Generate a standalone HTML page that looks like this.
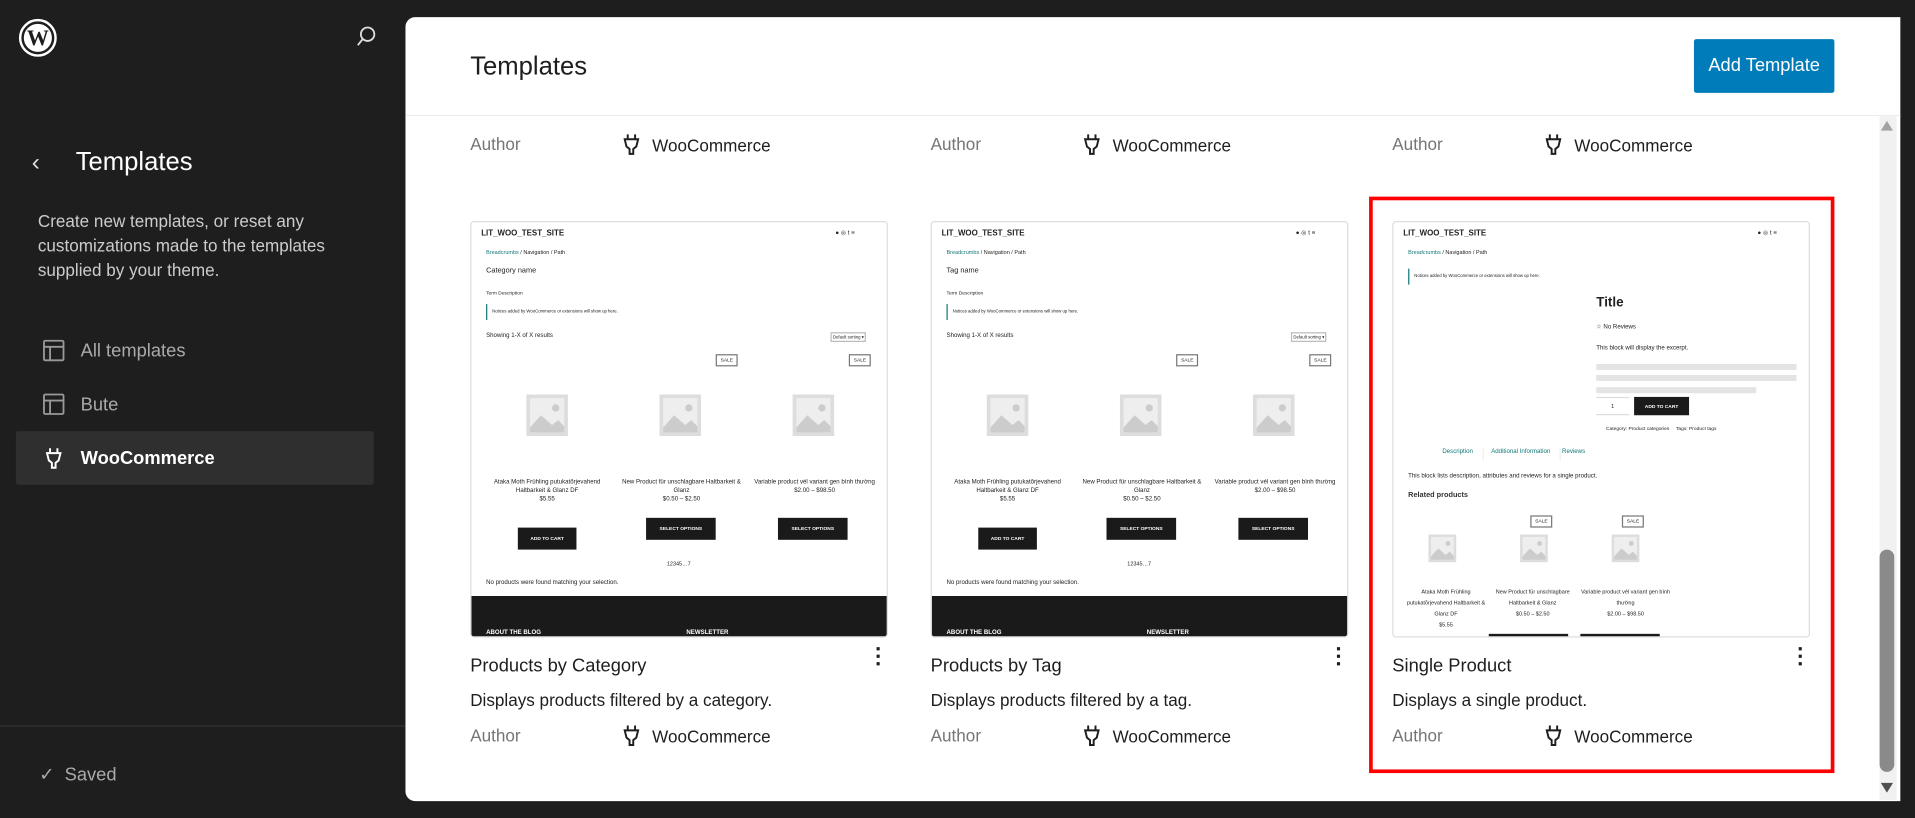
<!DOCTYPE html>
<html><head><meta charset="utf-8"><style>
*{box-sizing:border-box;margin:0;padding:0}
html,body{width:1915px;height:818px;overflow:hidden;background:#1e1e1e;font-family:"Liberation Sans",sans-serif}
#s{position:absolute;left:0;top:0;width:1568px;height:670px;transform:scale(1.22130);transform-origin:0 0}
.a{position:absolute;white-space:nowrap}
.nav{color:#aaa;font-size:15px}
.pv{position:absolute;top:181px;width:342px;height:341px;border:1px solid #ddd;border-radius:3px;overflow:hidden;background:#fff;color:#222}
.pv .a{font-size:4.5px}
.ph{position:absolute;width:36px;height:36px}
.btn{position:absolute;background:#1a1a1a;color:#fff;font-size:4px;font-weight:bold;text-align:center;line-height:18px;height:18px}
.sale{position:absolute;border:1px solid #777;font-size:4px;padding:2px 3px;line-height:4px}
.ct{text-align:center;white-space:normal;font-size:5px!important;line-height:7px}
.t{font-size:15px;color:#1e1e1e}
.d{font-size:14px;color:#1e1e1e}
.au{font-size:14px;color:#757575}
.wc{font-size:14px;color:#1e1e1e}
</style></head><body><div id="s">
<!-- sidebar -->
<svg class="a" style="left:15px;top:15px" width="32" height="32" viewBox="0 0 32 32"><circle cx="16" cy="16" r="14.5" fill="none" stroke="#fff" stroke-width="2"/><circle cx="16" cy="16" r="11.5" fill="#fff"/><text x="16" y="22" text-anchor="middle" font-family="Liberation Serif" font-weight="bold" font-size="18" fill="#1e1e1e">W</text></svg>
<svg class="a" style="left:290px;top:20px" width="20" height="20" viewBox="0 0 20 20"><circle cx="11" cy="8" r="5.5" fill="none" stroke="#ddd" stroke-width="1.5"/><path d="M7 12L3 17" stroke="#ddd" stroke-width="1.5"/></svg>
<div class="a" style="left:26px;top:122px;color:#ddd;font-size:20px">‹</div>
<div class="a" style="left:62px;top:121px;color:#fff;font-size:21px">Templates</div>
<div class="a" style="left:31px;top:171px;color:#ccc;font-size:14px;line-height:20px;white-space:normal;width:260px">Create new templates, or reset any customizations made to the templates supplied by your theme.</div>
<svg class="a" style="left:34px;top:277px" width="20" height="20" viewBox="0 0 20 20" fill="none" stroke="#999" stroke-width="1.5"><rect x="2" y="2" width="16" height="16" rx="1"/><path d="M2 7H18M7 7V18"/></svg>
<div class="a nav" style="left:66px;top:279px">All templates</div>
<svg class="a" style="left:34px;top:321px" width="20" height="20" viewBox="0 0 20 20" fill="none" stroke="#999" stroke-width="1.5"><rect x="2" y="2" width="16" height="16" rx="1"/><path d="M2 7H18M7 7V18"/></svg>
<div class="a nav" style="left:66px;top:323px">Bute</div>
<div class="a" style="left:13px;top:353px;width:293px;height:44px;background:#2f2f2f;border-radius:2px"></div>
<svg class="a" style="left:34px;top:365px" width="20" height="20" viewBox="0 0 20 20" fill="none" stroke="#fff" stroke-width="1.6"><path d="M7 2V6M13 2V6M4.5 6H15.5L14 12L11.5 14V18H8.5V14L6 12Z"/></svg>
<div class="a" style="left:66px;top:367px;color:#fff;font-size:15px;font-weight:bold">WooCommerce</div>
<div class="a" style="left:0;top:594px;width:332px;height:1px;background:#333"></div>
<div class="a" style="left:32px;top:625px;color:#aaa;font-size:15px">✓&nbsp;&nbsp;Saved</div>
<!-- main -->
<div class="a" style="left:332px;top:14px;width:1224px;height:642px;background:#fff;border-radius:8px 0 0 8px;overflow:hidden">
</div>
<div class="a" style="left:332px;top:94px;width:1224px;height:1px;background:#eee"></div>
<div class="a" style="left:385px;top:43px;font-size:21px;color:#1e1e1e">Templates</div>
<div class="a" style="left:1387px;top:32px;width:115px;height:44px;background:#007cba;border-radius:2px;color:#fff;font-size:15px;text-align:center;line-height:44px">Add Template</div>
<!-- scrollbar -->
<div class="a" style="left:1539px;top:95px;width:14px;height:560px;background:#f1f1f1"></div>
<div class="a" style="left:1540px;top:99px;width:0;height:0;border-left:5px solid transparent;border-right:5px solid transparent;border-bottom:8px solid #a3a3a3"></div>
<div class="a" style="left:1540px;top:641px;width:0;height:0;border-left:5px solid transparent;border-right:5px solid transparent;border-top:8px solid #505050"></div>
<div class="a" style="left:1539px;top:450px;width:12px;height:182px;background:#8a8a8a;border-radius:6px"></div>
<!-- top partial row -->
<div class="a" style="left:385px;top:86px;width:1100px;height:8px;overflow:hidden"></div>
<div class="a au" style="left:385px;top:110px">Author</div>
<div class="a au" style="left:762px;top:110px">Author</div>
<div class="a au" style="left:1140px;top:110px">Author</div>
<svg class="a" style="left:507px;top:108px" width="20" height="20" viewBox="0 0 20 20" fill="none" stroke="#1e1e1e" stroke-width="1.6"><path d="M7 2V6M13 2V6M4.5 6H15.5L14 12L11.5 14V18H8.5V14L6 12Z"/></svg>
<svg class="a" style="left:884px;top:108px" width="20" height="20" viewBox="0 0 20 20" fill="none" stroke="#1e1e1e" stroke-width="1.6"><path d="M7 2V6M13 2V6M4.5 6H15.5L14 12L11.5 14V18H8.5V14L6 12Z"/></svg>
<svg class="a" style="left:1262px;top:108px" width="20" height="20" viewBox="0 0 20 20" fill="none" stroke="#1e1e1e" stroke-width="1.6"><path d="M7 2V6M13 2V6M4.5 6H15.5L14 12L11.5 14V18H8.5V14L6 12Z"/></svg>
<div class="a wc" style="left:534px;top:111px">WooCommerce</div>
<div class="a wc" style="left:911px;top:111px">WooCommerce</div>
<div class="a wc" style="left:1289px;top:111px">WooCommerce</div>

<!-- preview 1 & 2 -->
<div class="pv" style="left:385px">
 <div class="a" style="left:8px;top:6px;font-size:6.5px!important;font-weight:bold">LIT_WOO_TEST_SITE</div>
 <div class="a" style="left:298px;top:6px;font-size:5px!important">● ◎ t ≡</div>
 <div class="a" style="left:12px;top:22px"><span style="color:#177">Breadcrumbs</span> / Navigation / Path</div>
 <div class="a" style="left:12px;top:37px;font-size:6px!important">Category name</div>
 <div class="a" style="left:12px;top:55px;font-size:4px!important">Term Description</div>
 <div class="a" style="left:12px;top:67px;height:13px;border-left:1px solid #177;padding-left:4px;line-height:13px;font-size:3.5px!important">Notices added by WooCommerce or extensions will show up here.</div>
 <div class="a" style="left:12px;top:90px;font-size:5px!important">Showing 1-X of X results</div>
 <div class="a" style="left:294px;top:90px;border:1px solid #bbb;font-size:3.5px!important;padding:1px">Default sorting ▾</div>
 <div class="sale" style="left:200px;top:108px">SALE</div><div class="sale" style="left:309px;top:108px">SALE</div>
 <svg class="ph" style="left:44px;top:140px" viewBox="0 0 36 36"><rect x="1" y="1" width="34" height="34" fill="#ddd"/><rect x="4" y="4" width="28" height="28" fill="#eee"/><circle cx="25" cy="12" r="3" fill="#ccc"/><path d="M4 28L13 18L22 26L27 22L32 27V32H4Z" fill="#ccc"/></svg>
 <svg class="ph" style="left:153px;top:140px" viewBox="0 0 36 36"><rect x="1" y="1" width="34" height="34" fill="#ddd"/><rect x="4" y="4" width="28" height="28" fill="#eee"/><circle cx="25" cy="12" r="3" fill="#ccc"/><path d="M4 28L13 18L22 26L27 22L32 27V32H4Z" fill="#ccc"/></svg>
 <svg class="ph" style="left:262px;top:140px" viewBox="0 0 36 36"><rect x="1" y="1" width="34" height="34" fill="#ddd"/><rect x="4" y="4" width="28" height="28" fill="#eee"/><circle cx="25" cy="12" r="3" fill="#ccc"/><path d="M4 28L13 18L22 26L27 22L32 27V32H4Z" fill="#ccc"/></svg>
 <div class="a ct" style="left:6px;top:210px;width:112px">Ataka Moth Frühling putukatõrjevahend Haltbarkeit &amp; Glanz DF<br>$5.55</div>
 <div class="a ct" style="left:118px;top:210px;width:108px">New Product für unschlagbare Haltbarkeit &amp; Glanz<br>$0.50 – $2.50</div>
 <div class="a ct" style="left:226px;top:210px;width:110px">Variable product vél variant gen bình thường<br>$2.00 – $98.50</div>
 <div class="btn" style="left:38px;top:250px;width:48px">ADD TO CART</div>
 <div class="btn" style="left:143px;top:242px;width:57px">SELECT OPTIONS</div>
 <div class="btn" style="left:251px;top:242px;width:57px">SELECT OPTIONS</div>
 <div class="a" style="left:160px;top:277px">12345…7</div>
 <div class="a" style="left:12px;top:292px;font-size:5px!important">No products were found matching your selection.</div>
 <div class="a" style="left:0;top:306px;width:342px;height:36px;background:#1a1a1a"></div>
 <div class="a" style="left:12px;top:333px;color:#fff;font-weight:bold;font-size:5px!important">ABOUT THE BLOG</div>
 <div class="a" style="left:176px;top:333px;color:#fff;font-weight:bold;font-size:5px!important">NEWSLETTER</div>
</div>
<div class="pv" style="left:762px">
 <div class="a" style="left:8px;top:6px;font-size:6.5px!important;font-weight:bold">LIT_WOO_TEST_SITE</div>
 <div class="a" style="left:298px;top:6px;font-size:5px!important">● ◎ t ≡</div>
 <div class="a" style="left:12px;top:22px"><span style="color:#177">Breadcrumbs</span> / Navigation / Path</div>
 <div class="a" style="left:12px;top:37px;font-size:6px!important">Tag name</div>
 <div class="a" style="left:12px;top:55px;font-size:4px!important">Term Description</div>
 <div class="a" style="left:12px;top:67px;height:13px;border-left:1px solid #177;padding-left:4px;line-height:13px;font-size:3.5px!important">Notices added by WooCommerce or extensions will show up here.</div>
 <div class="a" style="left:12px;top:90px;font-size:5px!important">Showing 1-X of X results</div>
 <div class="a" style="left:294px;top:90px;border:1px solid #bbb;font-size:3.5px!important;padding:1px">Default sorting ▾</div>
 <div class="sale" style="left:200px;top:108px">SALE</div><div class="sale" style="left:309px;top:108px">SALE</div>
 <svg class="ph" style="left:44px;top:140px" viewBox="0 0 36 36"><rect x="1" y="1" width="34" height="34" fill="#ddd"/><rect x="4" y="4" width="28" height="28" fill="#eee"/><circle cx="25" cy="12" r="3" fill="#ccc"/><path d="M4 28L13 18L22 26L27 22L32 27V32H4Z" fill="#ccc"/></svg>
 <svg class="ph" style="left:153px;top:140px" viewBox="0 0 36 36"><rect x="1" y="1" width="34" height="34" fill="#ddd"/><rect x="4" y="4" width="28" height="28" fill="#eee"/><circle cx="25" cy="12" r="3" fill="#ccc"/><path d="M4 28L13 18L22 26L27 22L32 27V32H4Z" fill="#ccc"/></svg>
 <svg class="ph" style="left:262px;top:140px" viewBox="0 0 36 36"><rect x="1" y="1" width="34" height="34" fill="#ddd"/><rect x="4" y="4" width="28" height="28" fill="#eee"/><circle cx="25" cy="12" r="3" fill="#ccc"/><path d="M4 28L13 18L22 26L27 22L32 27V32H4Z" fill="#ccc"/></svg>
 <div class="a ct" style="left:6px;top:210px;width:112px">Ataka Moth Frühling putukatõrjevahend Haltbarkeit &amp; Glanz DF<br>$5.55</div>
 <div class="a ct" style="left:118px;top:210px;width:108px">New Product für unschlagbare Haltbarkeit &amp; Glanz<br>$0.50 – $2.50</div>
 <div class="a ct" style="left:226px;top:210px;width:110px">Variable product vél variant gen bình thường<br>$2.00 – $98.50</div>
 <div class="btn" style="left:38px;top:250px;width:48px">ADD TO CART</div>
 <div class="btn" style="left:143px;top:242px;width:57px">SELECT OPTIONS</div>
 <div class="btn" style="left:251px;top:242px;width:57px">SELECT OPTIONS</div>
 <div class="a" style="left:160px;top:277px">12345…7</div>
 <div class="a" style="left:12px;top:292px;font-size:5px!important">No products were found matching your selection.</div>
 <div class="a" style="left:0;top:306px;width:342px;height:36px;background:#1a1a1a"></div>
 <div class="a" style="left:12px;top:333px;color:#fff;font-weight:bold;font-size:5px!important">ABOUT THE BLOG</div>
 <div class="a" style="left:176px;top:333px;color:#fff;font-weight:bold;font-size:5px!important">NEWSLETTER</div>
</div>
<!-- preview 3 -->
<div class="pv" style="left:1140px">
 <div class="a" style="left:8px;top:6px;font-size:6.5px!important;font-weight:bold">LIT_WOO_TEST_SITE</div>
 <div class="a" style="left:298px;top:6px;font-size:5px!important">● ◎ t ≡</div>
 <div class="a" style="left:12px;top:22px"><span style="color:#177">Breadcrumbs</span> / Navigation / Path</div>
 <div class="a" style="left:12px;top:38px;height:13px;border-left:1px solid #177;padding-left:4px;line-height:13px;font-size:3.5px!important">Notices added by WooCommerce or extensions will show up here.</div>
 <div class="a" style="left:166px;top:60px;font-size:11px!important;font-weight:bold">Title</div>
 <div class="a" style="left:166px;top:83px;font-size:5px!important">☆ No Reviews</div>
 <div class="a" style="left:166px;top:100px;font-size:5px!important">This block will display the excerpt.</div>
 <div class="a" style="left:166px;top:116px;width:164px;height:5px;background:#e4e4e4"></div>
 <div class="a" style="left:166px;top:125px;width:164px;height:5px;background:#e4e4e4"></div>
 <div class="a" style="left:166px;top:135px;width:131px;height:5px;background:#e4e4e4"></div>
 <div class="a" style="left:166px;top:143px;width:27px;height:15px;border:1px solid #ddd;border-left:0;border-right:0;text-align:center;line-height:13px">1</div>
 <div class="btn" style="left:197px;top:143px;width:45px;height:15px;line-height:15px">ADD TO CART</div>
 <div class="a" style="left:174px;top:166px;font-size:4px!important">Category: Product categories &nbsp;&nbsp;&nbsp; Tags: Product tags</div>
 <div class="a" style="left:32px;top:185px;color:#177;font-size:5px!important;border-right:1px solid #eee;padding:0 8px 4px 8px">Description</div>
 <div class="a" style="left:72px;top:185px;color:#177;font-size:5px!important;border-right:1px solid #eee;padding:0 8px 4px 8px">Additional Information</div>
 <div class="a" style="left:130px;top:185px;color:#177;font-size:5px!important;padding:0 8px">Reviews</div>
 <div class="a" style="left:12px;top:205px;font-size:5px!important">This block lists description, attributes and reviews for a single product.</div>
 <div class="a" style="left:12px;top:221px;font-size:6px!important;font-weight:bold;color:#333">Related products</div>
 <div class="sale" style="left:112px;top:240px">SALE</div><div class="sale" style="left:187px;top:240px">SALE</div>
 <svg class="ph" style="left:28px;top:255px;width:24px;height:24px" viewBox="0 0 36 36"><rect x="1" y="1" width="34" height="34" fill="#ddd"/><rect x="4" y="4" width="28" height="28" fill="#eee"/><circle cx="25" cy="12" r="3" fill="#ccc"/><path d="M4 28L13 18L22 26L27 22L32 27V32H4Z" fill="#ccc"/></svg>
 <svg class="ph" style="left:103px;top:255px;width:24px;height:24px" viewBox="0 0 36 36"><rect x="1" y="1" width="34" height="34" fill="#ddd"/><rect x="4" y="4" width="28" height="28" fill="#eee"/><circle cx="25" cy="12" r="3" fill="#ccc"/><path d="M4 28L13 18L22 26L27 22L32 27V32H4Z" fill="#ccc"/></svg>
 <svg class="ph" style="left:178px;top:255px;width:24px;height:24px" viewBox="0 0 36 36"><rect x="1" y="1" width="34" height="34" fill="#ddd"/><rect x="4" y="4" width="28" height="28" fill="#eee"/><circle cx="25" cy="12" r="3" fill="#ccc"/><path d="M4 28L13 18L22 26L27 22L32 27V32H4Z" fill="#ccc"/></svg>
 <div class="a ct" style="left:10px;top:298px;width:66px;font-size:4.5px!important;line-height:9px">Ataka Moth Frühling putukatõrjevahend Haltbarkeit &amp; Glanz DF<br>$5.55</div>
 <div class="a ct" style="left:76px;top:298px;width:76px;font-size:4.5px!important;line-height:9px">New Product für unschlagbare Haltbarkeit &amp; Glanz<br>$0.50 – $2.50</div>
 <div class="a ct" style="left:152px;top:298px;width:76px;font-size:4.5px!important;line-height:9px">Variable product vél variant gen bình thường<br>$2.00 – $98.50</div>
 <div class="btn" style="left:78px;top:337px;width:65px"></div>
 <div class="btn" style="left:153px;top:337px;width:65px"></div>
</div>

<!-- card meta -->
<div class="a t" style="left:385px;top:537px">Products by Category</div>
<div class="a t" style="left:762px;top:537px">Products by Tag</div>
<div class="a t" style="left:1140px;top:537px">Single Product</div>
<div class="a" style="left:710px;top:533px;font-size:18px;font-weight:bold;color:#1e1e1e;line-height:8px">⋮</div>
<div class="a" style="left:1087px;top:533px;font-size:18px;font-weight:bold;color:#1e1e1e;line-height:8px">⋮</div>
<div class="a" style="left:1465px;top:533px;font-size:18px;font-weight:bold;color:#1e1e1e;line-height:8px">⋮</div>
<div class="a d" style="left:385px;top:565px">Displays products filtered by a category.</div>
<div class="a d" style="left:762px;top:565px">Displays products filtered by a tag.</div>
<div class="a d" style="left:1140px;top:565px">Displays a single product.</div>
<div class="a au" style="left:385px;top:594px">Author</div>
<div class="a au" style="left:762px;top:594px">Author</div>
<div class="a au" style="left:1140px;top:594px">Author</div>
<svg class="a" style="left:507px;top:592px" width="20" height="20" viewBox="0 0 20 20" fill="none" stroke="#1e1e1e" stroke-width="1.6"><path d="M7 2V6M13 2V6M4.5 6H15.5L14 12L11.5 14V18H8.5V14L6 12Z"/></svg>
<svg class="a" style="left:884px;top:592px" width="20" height="20" viewBox="0 0 20 20" fill="none" stroke="#1e1e1e" stroke-width="1.6"><path d="M7 2V6M13 2V6M4.5 6H15.5L14 12L11.5 14V18H8.5V14L6 12Z"/></svg>
<svg class="a" style="left:1262px;top:592px" width="20" height="20" viewBox="0 0 20 20" fill="none" stroke="#1e1e1e" stroke-width="1.6"><path d="M7 2V6M13 2V6M4.5 6H15.5L14 12L11.5 14V18H8.5V14L6 12Z"/></svg>
<div class="a wc" style="left:534px;top:595px">WooCommerce</div>
<div class="a wc" style="left:911px;top:595px">WooCommerce</div>
<div class="a wc" style="left:1289px;top:595px">WooCommerce</div>
<!-- red highlight -->
<div class="a" style="left:1121px;top:161px;width:381px;height:472px;border:3px solid #f00"></div>
</div></body></html>
